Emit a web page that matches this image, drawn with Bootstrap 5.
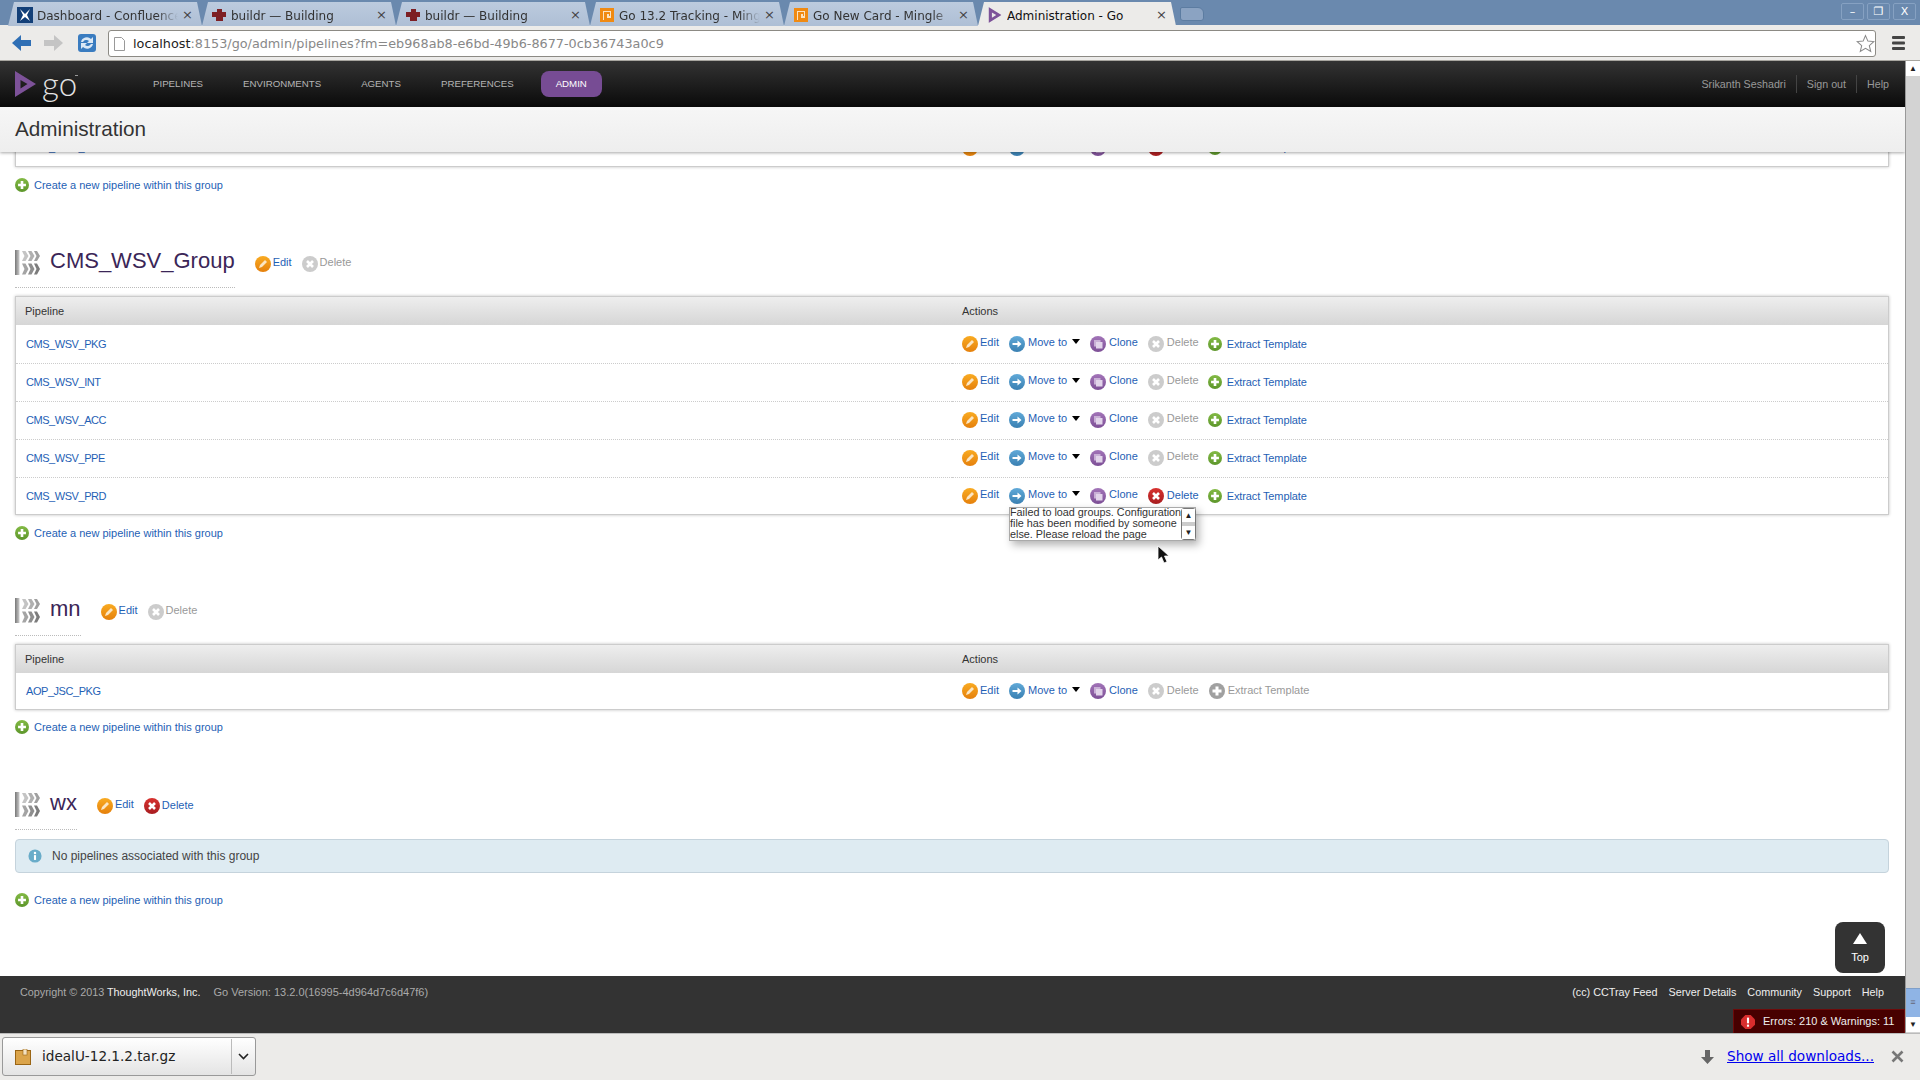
<!DOCTYPE html>
<html lang="en">
<head>
<meta charset="UTF-8">
<title>Administration - Go</title>
<link href="https://cdn.jsdelivr.net/npm/bootstrap@5.3.0/dist/css/bootstrap.min.css" rel="stylesheet">
<style>
    body { font-family: "Liberation Sans", Arial, sans-serif; font-size: 11px; color: #333; background: #fff; overflow: hidden; }
    a { text-decoration: none; color: #1f5fb5; }

    /* browser chrome */
    .tabstrip { height: 25px; background: #6a89ae; padding-left: 8px; font-family: "DejaVu Sans", sans-serif; font-size: 12px; flex: none; }
    .brw-tab { width: 194px; height: 24px; margin-top: 2px; padding: 5px 8px 0 5px; background: linear-gradient(#bccbde, #aebfd5); color: #333; clip-path: polygon(0 100%, 6px 0, calc(100% - 5px) 0, 100% 100%); gap: 4px; white-space: nowrap; }
    .brw-tab.active { background: #ecebe9; color: #111; width: 198px; height: 24px; }
    .tab-title { flex: 1; overflow: hidden; -webkit-mask-image: linear-gradient(to right, #000 85%, transparent); mask-image: linear-gradient(to right, #000 85%, transparent); }
    .brw-tab.active .tab-title { -webkit-mask-image: none; mask-image: none; }
    .tab-x { width: 12px; color: #444; font-size: 13px; line-height: 15px; }
    .tab-new { width: 24px; height: 14px; margin: 7px 0 0 4px; background: #8ba3c2; border: 1px solid #5c7ca1; border-radius: 2px 6px 3px 3px; }
    .winbtn { width: 23px; height: 17px; margin: 3px 0 0 3px; background: #6a89ae; border: 1px solid #86a1c2; border-radius: 2px; color: #fff; font-size: 11px; line-height: 15px; text-align: center; }
    .toolbar { height: 36px; background: #ecebe9; border-bottom: 1px solid #a8a6a0; flex: none; padding-top: 1px; }
    .nav-next { margin-left: 13px; }
    .nav-reload { margin-left: 14px; }
    .urlbox { margin-left: 11px; width: 1768px; height: 27px; background: #fff; border: 1px solid #8c8a84; border-radius: 3px; font-family: "DejaVu Sans", sans-serif; font-size: 12.8px; color: #888; padding: 1px 0 0 5px; gap: 8px; }
    .urlbox b { font-weight: 400; color: #222; }

    /* go header */
    .go-head { height: 46px; background: linear-gradient(#333, #0a0a0a); flex: none; padding: 0 16px 0 15px; color: #aaa; }
    .go-word { font-family: Lato, "Liberation Sans", sans-serif; font-weight: 300; font-size: 33px; line-height: 44px; height: 46px; color: #e4e4e4; margin-left: 6px; width: 111px; position: relative; }
    .go-word::after { content: ""; position: absolute; left: 33px; top: 14px; width: 3px; height: 1px; background: #999; }
    .go-menu a { color: #b5b5b5; font-size: 9.700px; text-transform: uppercase; margin-right: 40px; }
    .go-menu a.current { color: #fff; background: #774c94; border-radius: 8px; padding: 7px 15px; height: 26px; line-height: 12px; margin-left: -13px; }
    .go-user span { padding: 0 10px; border-left: 1px solid #444; line-height: 18px; color: #999; font-size: 10.7px; }
    .go-user span:first-child { border: 0; }
    .go-user span:last-child { padding-right: 0; }

    .admin-bar { height: 45px; background: linear-gradient(#f6f6f6, #eee); box-shadow: 0 1px 3px rgba(0, 0, 0, .35); padding-left: 15px; font-size: 20.700px; line-height: 44px; color: #333; flex: none; position: relative; z-index: 5; }

    /* page content */
    .page-scroll { flex: 1; overflow: hidden; position: relative; padding: 0 16px 0 15px; }
    .tbl-wrap { border: 1px solid #ccc; box-shadow: 0 0 3px rgba(0, 0, 0, .25); background: #fff; margin-top: 8px; }
    .tbl-wrap.clipped { margin-top: -24px; }
    .pipe-tbl { margin: 0; table-layout: fixed; }
    .pipe-tbl th { height: 28px; padding: 0 0 0 9px; font-weight: 400; font-size: 11px; color: #333; vertical-align: middle; background: linear-gradient(#eee, #d6d6d6); border: 0; }
    .pipe-tbl td { height: 38px; padding: 0 0 0 10px; vertical-align: middle; border: 0; border-bottom: 1px dotted #ccc; font-size: 11px; }
    .pipe-tbl td a.pipe-name { letter-spacing: -.45px; }
    .pipe-tbl tr:last-child td { height: 37px; border-bottom: 0; }
    .solo .pipe-tbl tr:last-child td { height: 36px; }
    .pipe-tbl th + th, .pipe-tbl td + td { padding-left: 10px; }
    .act-row { gap: 10px; align-items: center; position: relative; }
    .act { display: inline-flex; align-items: center; gap: 3px; }
    .act:first-child { gap: 2px; }
    .act > span { position: relative; top: -2px; }
    .solo .act > span { top: -1px; }
    .act.off { color: #999; }
    .act.big > span { top: 0; letter-spacing: -.1px; }
    .act.big { gap: 5px; margin-left: -1px; }
    .act.del > span { top: -1px; }
    .caret-down { width: 0; height: 0; border: 4.5px solid transparent; border-top: 5px solid #000; border-bottom: 0; margin-left: 2px; position: relative; top: -2px; }
    .ico16 { width: 16px; height: 16px; flex: none; }
    .ico14 { width: 14px; height: 14px; flex: none; }
    .new-link { margin-top: 11px; height: 14px; gap: 5px; line-height: 14px; }
    .solo + .new-link { margin-top: 10px; }
    .after-info { margin-top: 20px; }
    .grp-head { margin-top: 58px; align-items: flex-start; }
    .grp-name { border-bottom: 1px dotted #bbb; padding-bottom: 12px; gap: 10px; }
    .grp-name h2 { margin: 0; font-family: "Liberation Sans", sans-serif; font-size: 22px; line-height: 21px; font-weight: 400; color: #3b2657; }
    .grp-acts { margin: 6px 0 0 20px; gap: 10px; }
    .grp-acts .act { gap: 2px; }
    .info-box { margin-top: 9px; height: 34px; background: #deebf2; border: 1px solid #c5d3dc; border-radius: 4px; padding-left: 12px; gap: 10px; font-size: 12px; color: #444; }
    .err-popup { position: absolute; left: 47px; top: 19px; width: 187px; height: 34px; background: #fff; border: 1px solid #aaa; box-shadow: 3px 4px 8px rgba(0, 0, 0, .3); font-size: 10.8px; line-height: 11px; color: #333; z-index: 3; }
    .pop-text { flex: 1; white-space: nowrap; margin-top: -1px; }
    .pop-bar { width: 15px; flex: none; border: 1px solid #777; border-radius: 3px; background: #ccc; font-size: 8px; line-height: 13px; text-align: center; color: #222; }
    .pop-bar i { display: block; height: 13px; background: #fff; font-style: normal; }
    .pop-bar i + i { margin-top: 4px; }
    .pop-cursor { position: absolute; left: 1157px; top: 393px; z-index: 4; }
    .top-btn { position: absolute; right: 20px; bottom: 3px; width: 50px; height: 51px; background: #333; color: #fff; border-radius: 8px; text-align: center; font-size: 11px; padding-top: 11px; line-height: 12px; z-index: 6; }
    .top-arrow { width: 0; height: 0; margin: 0 auto 7px; border: 7px solid transparent; border-bottom: 11px solid #fff; border-top: 0; }

    .go-foot { height: 57px; background: #333; color: #aaa; flex: none; padding: 8px 21px 0 20px; font-size: 10.8px; position: relative; }
    .go-foot a { color: #eee; }
    .go-version { font-size: 11px; margin-left: 13px; }
    .foot-links { gap: 11px; font-size: 10.8px; }
    .err-badge { position: absolute; right: 0; bottom: 0; width: 172px; height: 24px; background: #470000; border: 1px solid #6d0a0a; border-bottom: 0; color: #eee; font-size: 11px; padding-left: 7px; gap: 8px; }

    .side-scroll { width: 15px; background: #d3d3d3; border-left: 1px solid #999; position: relative; flex: none; }
    .sb-btn { height: 15px; background: #fff; font-size: 8px; line-height: 15px; text-align: center; color: #222; }
    .sb-gap { height: 912px; }
    .sb-thumb { height: 29px; background: #8fb4e5; border-top: 1px solid #7f9fc9; color: #667; text-align: center; line-height: 27px; font-size: 9px; }

    .dl-shelf { height: 47px; background: #ecebe9; border-top: 1px solid #bbb; flex: none; font-family: "DejaVu Sans", sans-serif; font-size: 13.600px; padding: 3px 16px 4px 2px; }
    .dl-item { width: 254px; height: 39px; background: linear-gradient(#fff, #e4e4e4); border: 1px solid #999; border-radius: 3px; color: #222; padding-left: 12px; }
    .dl-name { margin-left: 11px; width: 189px; }
    .dl-sep { width: 1px; height: 35px; background: #bbb; }
    .dl-chev { margin-left: 6px; }
    .dl-all { color: #00e; text-decoration: underline; margin: 0 17px 0 13px; }
</style>
</head>
<body>
<svg width="0" height="0" class="position-absolute">
    <defs>
        <linearGradient id="gOr" x1="0" y1="0" x2="0" y2="1"><stop offset="0" stop-color="#f9ab22"/><stop offset="1" stop-color="#e5800c"/></linearGradient>
        <linearGradient id="gBl" x1="0" y1="0" x2="0" y2="1"><stop offset="0" stop-color="#60a9d8"/><stop offset="1" stop-color="#3a80b2"/></linearGradient>
        <linearGradient id="gPu" x1="0" y1="0" x2="0" y2="1"><stop offset="0" stop-color="#a274b8"/><stop offset="1" stop-color="#7d4f96"/></linearGradient>
        <linearGradient id="gRe" x1="0" y1="0" x2="0" y2="1"><stop offset="0" stop-color="#d8322f"/><stop offset="1" stop-color="#a81d20"/></linearGradient>
        <linearGradient id="gGr" x1="0" y1="0" x2="0" y2="1"><stop offset="0" stop-color="#83ba45"/><stop offset="1" stop-color="#5d962b"/></linearGradient>
        <linearGradient id="gBar" x1="0" y1="0" x2="1" y2="0"><stop offset="0" stop-color="#777"/><stop offset="1" stop-color="#ccc"/></linearGradient>
    </defs>
    <symbol id="i-edit" viewBox="0 0 16 16"><circle cx="8" cy="8" r="8" fill="url(#gOr)"/><path d="M4 12l1-3 5-5 2 2-5 5z" fill="#fbe6c4"/></symbol>
    <symbol id="i-move" viewBox="0 0 16 16"><circle cx="8" cy="8" r="8" fill="url(#gBl)"/><path d="M3.500 7h5V4.500L12.500 8l-4 3.500V9h-5z" fill="#fff"/></symbol>
    <symbol id="i-clone" viewBox="0 0 16 16"><circle cx="8" cy="8" r="8" fill="url(#gPu)"/><rect x="4" y="4" width="6.500" height="6.500" fill="#c9b0d6"/><rect x="6" y="6" width="6.500" height="6.500" fill="#e2d4ea"/></symbol>
    <symbol id="i-del-off" viewBox="0 0 16 16"><circle cx="8" cy="8" r="8" fill="#ccc"/><path d="M5 5l6 6M11 5l-6 6" stroke="#fff" stroke-width="2.600"/></symbol>
    <symbol id="i-del" viewBox="0 0 16 16"><circle cx="8" cy="8" r="8" fill="url(#gRe)"/><path d="M5 5l6 6M11 5l-6 6" stroke="#fff" stroke-width="2.600"/></symbol>
    <symbol id="i-plus" viewBox="0 0 16 16"><circle cx="8" cy="8" r="8" fill="url(#gGr)"/><path d="M8 3.500v9M3.500 8h9" stroke="#fff" stroke-width="3"/></symbol>
    <symbol id="i-plus-off" viewBox="0 0 16 16"><circle cx="8" cy="8" r="8" fill="#a0a0a0"/><path d="M8 3.500v9M3.500 8h9" stroke="#fff" stroke-width="3"/></symbol>
    <symbol id="i-info" viewBox="0 0 16 16"><circle cx="8" cy="8" r="7.500" fill="#69acc9"/><circle cx="8" cy="4.500" r="1.400" fill="#fff"/><rect x="6.800" y="7" width="2.400" height="5.500" fill="#fff"/></symbol>
    <symbol id="i-group" viewBox="0 0 25 25">
        <rect width="4.500" height="25" fill="url(#gBar)"/>
        <path d="M7 1h3.500l3 5-3 5H7l2.500-5z" fill="#c4c4c4"/><path d="M13 1h3.500l3 5-3 5H13l2.500-5z" fill="#b0b0b0"/><path d="M19 1h3l3 5-3 5h-3l2.500-5z" fill="#a0a0a0"/>
        <path d="M7 13.500h3.500l3 5.500-3 5.500H7L9.500 19z" fill="#a4a4a4"/><path d="M13 13.500h3.500l3 5.500-3 5.500H13l2.500-5.500z" fill="#8e8e8e"/><path d="M19 13.500h3l3 5.500-3 5.500h-3l2.500-5.500z" fill="#7c7c7c"/>
    </symbol>
    <symbol id="i-go" viewBox="0 0 21 26"><path fill-rule="evenodd" d="M0 0l21 13L0 26zM5.500 9v8.500l7-4.500z" fill="#7d5299"/></symbol>
</svg>

<div class="d-flex flex-column vh-100">
    <div class="tabstrip d-flex">
        <div class="brw-tab d-flex">
            <svg class="ico16 ms-1" viewBox="0 0 16 16"><rect width="16" height="16" fill="#123f78"/><path d="M3 2l5 5 5-5-3 6 3 6-5-4-5 4 3-6z" fill="#fff"/></svg>
            <div class="tab-title">Dashboard - Confluence</div><div class="tab-x">×</div>
        </div>
        <div class="brw-tab d-flex">
            <svg class="ico16 ms-1" viewBox="0 0 16 16"><path d="M1 5h5V2h5v3h4v5h-3v4H5v-4H1z" fill="#7d1f24"/></svg>
            <div class="tab-title">buildr — Building</div><div class="tab-x">×</div>
        </div>
        <div class="brw-tab d-flex">
            <svg class="ico16 ms-1" viewBox="0 0 16 16"><path d="M1 5h5V2h5v3h4v5h-3v4H5v-4H1z" fill="#7d1f24"/></svg>
            <div class="tab-title">buildr — Building</div><div class="tab-x">×</div>
        </div>
        <div class="brw-tab d-flex">
            <svg class="ico16 ms-1" viewBox="0 0 16 16"><rect x="1" y="1" width="14" height="14" fill="#f08a12"/><path d="M4 13V4h8v7H8V7h2v2h1V5H5v8z" fill="#fbe3c4"/></svg>
            <div class="tab-title">Go 13.2 Tracking - Mingle</div><div class="tab-x">×</div>
        </div>
        <div class="brw-tab d-flex">
            <svg class="ico16 ms-1" viewBox="0 0 16 16"><rect x="1" y="1" width="14" height="14" fill="#f08a12"/><path d="M4 13V4h8v7H8V7h2v2h1V5H5v8z" fill="#fbe3c4"/></svg>
            <div class="tab-title">Go New Card - Mingle</div><div class="tab-x">×</div>
        </div>
        <div class="brw-tab active d-flex">
            <svg class="ico16 ms-1" viewBox="0 0 21 26"><use href="#i-go"/></svg>
            <div class="tab-title">Administration - Go</div><div class="tab-x">×</div>
        </div>
        <div class="tab-new"></div>
        <div class="ms-auto d-flex pe-1">
            <div class="winbtn">–</div>
            <div class="winbtn">❐</div>
            <div class="winbtn">X</div>
        </div>
    </div>

    <div class="toolbar d-flex align-items-center ps-2">
        <svg class="ms-1" width="19" height="18" viewBox="0 0 19 18"><path d="M0 9l9-8v5h10v6H9v5z" fill="#2f6fb5"/></svg>
        <svg class="nav-next" width="19" height="18" viewBox="0 0 19 18"><path d="M19 9l-9-8v5H0v6h10v5z" fill="#c4c4c4"/></svg>
        <svg class="nav-reload" width="20" height="20" viewBox="0 0 20 20"><rect x="1" y="1" width="18" height="18" rx="3" fill="#3a7cc0"/><path d="M4 9a6 6 0 0 1 10-3l2-2v6h-6l2-2a4 4 0 0 0-6 1zM16 11a6 6 0 0 1-10 3l-2 2v-6h6l-2 2a4 4 0 0 0 6-1z" fill="#dbe8f5"/></svg>
        <div class="urlbox d-flex align-items-center">
            <svg width="11" height="14" viewBox="0 0 11 14"><path d="M.5.5h7l3 3v10H.5z" fill="#fff" stroke="#999"/></svg>
            <span><b>localhost</b>:8153/go/admin/pipelines?fm=eb968ab8-e6bd-49b6-8677-0cb36743a0c9</span>
            <svg class="ms-auto" width="19" height="19" viewBox="0 0 24 24"><path d="M12 2l3 7 7.500.6-5.700 5 1.800 7.400L12 18l-6.600 4 1.800-7.400-5.700-5L9 9z" fill="#fff" stroke="#888" stroke-width="1.300"/></svg>
        </div>
        <svg class="ms-3" width="13" height="14" viewBox="0 0 13 14"><rect width="13" height="3" rx="1" fill="#444"/><rect y="5.500" width="13" height="3" rx="1" fill="#444"/><rect y="11" width="13" height="3" rx="1" fill="#444"/></svg>
    </div>

    <div class="d-flex flex-grow-1 overflow-hidden">
        <div class="d-flex flex-column flex-grow-1 overflow-hidden">
            <div class="go-head d-flex align-items-center">
                <svg width="21" height="26" viewBox="0 0 21 26"><use href="#i-go"/></svg>
                <div class="go-word">go</div>
                <div class="go-menu d-flex align-items-center">
                    <a href="#">Pipelines</a>
                    <a href="#">Environments</a>
                    <a href="#">Agents</a>
                    <a href="#">Preferences</a>
                    <a href="#" class="current">Admin</a>
                </div>
                <div class="go-user d-flex ms-auto">
                    <span>Srikanth Seshadri</span><span>Sign out</span><span>Help</span>
                </div>
            </div>
            <div class="admin-bar">Administration</div>

            <div class="page-scroll">
                <div class="tbl-wrap clipped">
                    <table class="table pipe-tbl"><tbody><tr><td class="w-50"><a class="pipe-name" href="#">CMS_WSV_GRP</a></td>
                        <td><div class="d-flex act-row">
                            <a class="act" href="#"><svg class="ico16"><use href="#i-edit"/></svg><span>Edit</span></a>
                            <a class="act" href="#"><svg class="ico16"><use href="#i-move"/></svg><span>Move to</span><i class="caret-down"></i></a>
                            <a class="act" href="#"><svg class="ico16"><use href="#i-clone"/></svg><span>Clone</span></a>
                            <a class="act del" href="#"><svg class="ico16"><use href="#i-del"/></svg><span>Delete</span></a>
                            <a class="act big" href="#"><svg class="ico14"><use href="#i-plus"/></svg><span>Extract Template</span></a>
                        </div></td></tr></tbody></table>
                </div>
                <a class="new-link d-flex align-items-center" href="#"><svg class="ico14"><use href="#i-plus"/></svg>Create a new pipeline within this group</a>

                <div class="grp-head d-flex">
                    <div class="grp-name d-flex"><svg width="25" height="25"><use href="#i-group"/></svg><h2>CMS_WSV_Group</h2></div>
                    <div class="grp-acts d-flex">
                        <a class="act" href="#"><svg class="ico16"><use href="#i-edit"/></svg><span>Edit</span></a>
                        <span class="act off"><svg class="ico16"><use href="#i-del-off"/></svg><span>Delete</span></span>
                    </div>
                </div>
                <div class="tbl-wrap">
                    <table class="table pipe-tbl">
                        <thead><tr><th class="w-50">Pipeline</th><th>Actions</th></tr></thead>
                        <tbody>
                            <tr><td><a class="pipe-name" href="#">CMS_WSV_PKG</a></td><td><div class="d-flex act-row">
                                <a class="act" href="#"><svg class="ico16"><use href="#i-edit"/></svg><span>Edit</span></a>
                                <a class="act" href="#"><svg class="ico16"><use href="#i-move"/></svg><span>Move to</span><i class="caret-down"></i></a>
                                <a class="act" href="#"><svg class="ico16"><use href="#i-clone"/></svg><span>Clone</span></a>
                                <span class="act off"><svg class="ico16"><use href="#i-del-off"/></svg><span>Delete</span></span>
                                <a class="act big" href="#"><svg class="ico14"><use href="#i-plus"/></svg><span>Extract Template</span></a>
                            </div></td></tr>
                            <tr><td><a class="pipe-name" href="#">CMS_WSV_INT</a></td><td><div class="d-flex act-row">
                                <a class="act" href="#"><svg class="ico16"><use href="#i-edit"/></svg><span>Edit</span></a>
                                <a class="act" href="#"><svg class="ico16"><use href="#i-move"/></svg><span>Move to</span><i class="caret-down"></i></a>
                                <a class="act" href="#"><svg class="ico16"><use href="#i-clone"/></svg><span>Clone</span></a>
                                <span class="act off"><svg class="ico16"><use href="#i-del-off"/></svg><span>Delete</span></span>
                                <a class="act big" href="#"><svg class="ico14"><use href="#i-plus"/></svg><span>Extract Template</span></a>
                            </div></td></tr>
                            <tr><td><a class="pipe-name" href="#">CMS_WSV_ACC</a></td><td><div class="d-flex act-row">
                                <a class="act" href="#"><svg class="ico16"><use href="#i-edit"/></svg><span>Edit</span></a>
                                <a class="act" href="#"><svg class="ico16"><use href="#i-move"/></svg><span>Move to</span><i class="caret-down"></i></a>
                                <a class="act" href="#"><svg class="ico16"><use href="#i-clone"/></svg><span>Clone</span></a>
                                <span class="act off"><svg class="ico16"><use href="#i-del-off"/></svg><span>Delete</span></span>
                                <a class="act big" href="#"><svg class="ico14"><use href="#i-plus"/></svg><span>Extract Template</span></a>
                            </div></td></tr>
                            <tr><td><a class="pipe-name" href="#">CMS_WSV_PPE</a></td><td><div class="d-flex act-row">
                                <a class="act" href="#"><svg class="ico16"><use href="#i-edit"/></svg><span>Edit</span></a>
                                <a class="act" href="#"><svg class="ico16"><use href="#i-move"/></svg><span>Move to</span><i class="caret-down"></i></a>
                                <a class="act" href="#"><svg class="ico16"><use href="#i-clone"/></svg><span>Clone</span></a>
                                <span class="act off"><svg class="ico16"><use href="#i-del-off"/></svg><span>Delete</span></span>
                                <a class="act big" href="#"><svg class="ico14"><use href="#i-plus"/></svg><span>Extract Template</span></a>
                            </div></td></tr>
                            <tr><td><a class="pipe-name" href="#">CMS_WSV_PRD</a></td><td><div class="d-flex act-row">
                                <a class="act" href="#"><svg class="ico16"><use href="#i-edit"/></svg><span>Edit</span></a>
                                <a class="act" href="#"><svg class="ico16"><use href="#i-move"/></svg><span>Move to</span><i class="caret-down"></i></a>
                                <a class="act" href="#"><svg class="ico16"><use href="#i-clone"/></svg><span>Clone</span></a>
                                <a class="act del" href="#"><svg class="ico16"><use href="#i-del"/></svg><span>Delete</span></a>
                                <a class="act big" href="#"><svg class="ico14"><use href="#i-plus"/></svg><span>Extract Template</span></a>
                                <div class="err-popup d-flex">
                                    <div class="pop-text">Failed to load groups. Configuration<br>file has been modified by someone<br>else. Please reload the page</div>
                                    <div class="pop-bar"><i>▲</i><i>▼</i></div>
                                </div>
                            </div></td></tr>
                        </tbody>
                    </table>
                </div>
                <a class="new-link d-flex align-items-center" href="#"><svg class="ico14"><use href="#i-plus"/></svg>Create a new pipeline within this group</a>

                <div class="grp-head d-flex">
                    <div class="grp-name d-flex"><svg width="25" height="25"><use href="#i-group"/></svg><h2>mn</h2></div>
                    <div class="grp-acts d-flex">
                        <a class="act" href="#"><svg class="ico16"><use href="#i-edit"/></svg><span>Edit</span></a>
                        <span class="act off"><svg class="ico16"><use href="#i-del-off"/></svg><span>Delete</span></span>
                    </div>
                </div>
                <div class="tbl-wrap solo">
                    <table class="table pipe-tbl">
                        <thead><tr><th class="w-50">Pipeline</th><th>Actions</th></tr></thead>
                        <tbody>
                            <tr><td><a class="pipe-name" href="#">AOP_JSC_PKG</a></td><td><div class="d-flex act-row">
                                <a class="act" href="#"><svg class="ico16"><use href="#i-edit"/></svg><span>Edit</span></a>
                                <a class="act" href="#"><svg class="ico16"><use href="#i-move"/></svg><span>Move to</span><i class="caret-down"></i></a>
                                <a class="act" href="#"><svg class="ico16"><use href="#i-clone"/></svg><span>Clone</span></a>
                                <span class="act off"><svg class="ico16"><use href="#i-del-off"/></svg><span>Delete</span></span>
                                <span class="act off"><svg class="ico16"><use href="#i-plus-off"/></svg><span>Extract Template</span></span>
                            </div></td></tr>
                        </tbody>
                    </table>
                </div>
                <a class="new-link d-flex align-items-center" href="#"><svg class="ico14"><use href="#i-plus"/></svg>Create a new pipeline within this group</a>

                <div class="grp-head d-flex">
                    <div class="grp-name d-flex"><svg width="25" height="25"><use href="#i-group"/></svg><h2>wx</h2></div>
                    <div class="grp-acts d-flex">
                        <a class="act" href="#"><svg class="ico16"><use href="#i-edit"/></svg><span>Edit</span></a>
                        <a class="act del" href="#"><svg class="ico16"><use href="#i-del"/></svg><span>Delete</span></a>
                    </div>
                </div>
                <div class="info-box d-flex align-items-center"><svg class="ico14"><use href="#i-info"/></svg>No pipelines associated with this group</div>
                <a class="new-link after-info d-flex align-items-center" href="#"><svg class="ico14"><use href="#i-plus"/></svg>Create a new pipeline within this group</a>

                <svg class="pop-cursor" width="13" height="19" viewBox="0 0 13 19"><path d="M1 1v14l3.500-3 2.500 6 3-1.300-2.500-5.700H12z" fill="#111" stroke="#fff" stroke-width=".8"/></svg>
                <a class="top-btn" href="#"><div class="top-arrow"></div><span class="text-white">Top</span></a>
            </div>

            <div class="go-foot d-flex">
                <div>Copyright © 2013 <a href="#">ThoughtWorks, Inc.</a><span class="go-version">Go Version: 13.2.0(16995-4d964d7c6d47f6)</span></div>
                <div class="foot-links d-flex ms-auto">
                    <a href="#">(cc) CCTray Feed</a><a href="#">Server Details</a><a href="#">Community</a><a href="#">Support</a><a href="#">Help</a>
                </div>
                <div class="err-badge d-flex align-items-center">
                    <svg class="ico14" viewBox="0 0 16 16"><path d="M5 0h6l5 5v6l-5 5H5l-5-5V5z" fill="#d92d2d"/><rect x="6.800" y="3" width="2.400" height="6.500" fill="#fff"/><rect x="6.800" y="11" width="2.400" height="2.400" fill="#fff"/></svg>
                    Errors: 210 &amp; Warnings: 11
                </div>
            </div>
        </div>
        <div class="side-scroll">
            <div class="sb-btn">▲</div>
            <div class="sb-gap"></div>
            <div class="sb-thumb">≡</div>
            <div class="sb-btn">▼</div>
        </div>
    </div>

    <div class="dl-shelf d-flex align-items-center">
        <div class="dl-item d-flex align-items-center">
            <svg width="16" height="16" viewBox="0 0 16 16"><rect x=".5" y="1.500" width="15" height="14" fill="#dba44a" stroke="#9a6514"/><rect x="8" y="0" width="4" height="6" fill="#f4e2c0" stroke="#9a6514" stroke-width=".6"/></svg>
            <div class="dl-name">idealU-12.1.2.tar.gz</div>
            <div class="dl-sep"></div>
            <svg class="dl-chev" width="11" height="7" viewBox="0 0 11 7"><path d="M1 1l4.500 4.500L10 1" fill="none" stroke="#222" stroke-width="1.600"/></svg>
        </div>
        <svg class="ms-auto" width="13" height="14" viewBox="0 0 13 14"><path d="M4 0h5v7h4l-6.500 7L0 7h4z" fill="#666"/></svg>
        <a class="dl-all" href="#">Show all downloads...</a>
        <svg width="13" height="13" viewBox="0 0 13 13"><path d="M1.500 1.500l10 10M11.500 1.500l-10 10" stroke="#777" stroke-width="2.600"/></svg>
    </div>
</div>
<script src="https://cdn.jsdelivr.net/npm/bootstrap@5.3.0/dist/js/bootstrap.bundle.min.js"></script>
</body>
</html>
